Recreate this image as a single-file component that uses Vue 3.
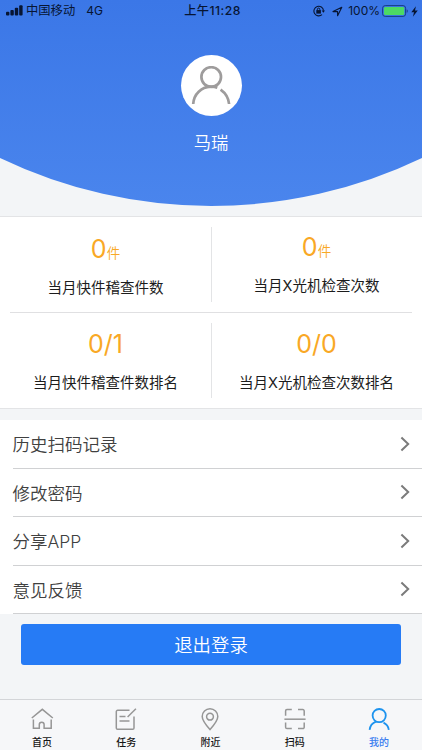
<template>
  <div class="page">
    <header class="hero">
      <svg class="hero-bg" width="422" height="207" viewBox="0 0 422 207">
        <defs>
          <linearGradient id="heroFill" x1="0" y1="0" x2="0" y2="1">
            <stop offset="0" stop-color="#3b77e7" />
            <stop offset="1" stop-color="#4a85ed" />
          </linearGradient>
        </defs>
        <path d="M0 0H422V158A488 488 0 0 1 0 158Z" fill="url(#heroFill)" />
      </svg>

      <div class="status">
        <div class="status-left">
          <svg class="signal" width="17" height="11" viewBox="0 0 17 11" fill="#071533">
            <rect x="0" y="6.8" width="3.4" height="3.7" rx="1" />
            <rect x="4.4" y="5" width="3.4" height="5.5" rx="1" />
            <rect x="8.8" y="2.8" width="3.4" height="7.7" rx="1" />
            <rect x="13.2" y="0.3" width="3.4" height="10.2" rx="1" />
          </svg>
          <span class="carrier">中国移动</span>
          <span class="network">4G</span>
        </div>
        <div class="status-time">上午11:28</div>
        <div class="status-right">
          <svg class="lock" width="12" height="12" viewBox="0 0 12 12" fill="none" stroke="#071533">
            <path d="M9 9.6A4.8 4.8 0 1 1 10.5 5.6" stroke-width="1.1" />
            <path d="M8.7 5.4h3.3L10.4 7.8z" fill="#071533" stroke="none" />
            <rect x="3.3" y="5.1" width="4.6" height="3.5" fill="#071533" stroke="none" />
            <path d="M4.4 5.5V4.3a1.2 1.2 0 0 1 2.4 0v1.2" stroke-width="1" />
          </svg>
          <svg class="arrow" width="11" height="11" viewBox="0 0 11 11" fill="none" stroke="#071533" stroke-width="1.1">
            <path d="M1 5.6L9.8 1.2L5.6 9.8V5.6z" stroke-linejoin="round" />
          </svg>
          <span class="percent">100%</span>
          <svg class="battery" width="27" height="12" viewBox="0 0 27 12">
            <rect x="0.6" y="0.6" width="23" height="10.8" rx="2.6" fill="none" stroke="#173c85" stroke-width="1" />
            <rect x="2" y="2" width="20.2" height="8" rx="1.2" fill="#4cd964" />
            <path d="M24.7 4.2c1.4.5 1.4 3.1 0 3.6z" fill="#173c85" />
          </svg>
          <svg class="bolt" width="7" height="11" viewBox="0 0 7 11">
            <path d="M4.9 0.3L0.3 6.2H3L1.9 10.7L6.8 4.5H4z" fill="#071533" />
          </svg>
        </div>
      </div>

      <div class="avatar">
        <svg width="40" height="40" viewBox="0 0 40 40" fill="none" stroke="#9e9c9c" stroke-width="2.7">
          <circle cx="20.2" cy="11" r="9.8" />
          <path d="M2.2 38C2.8 27.8 10.5 21.1 19.5 20.7c2.4-.1 4.5.2 6.8 1" />
          <path d="M29.6 23.6c4.8 3.4 8 8.5 8.5 14.4" />
        </svg>
      </div>
      <div class="name">马瑞</div>
    </header>

    <section class="stats">
      <div v-for="(stat, i) in stats" :key="stat.label" class="stat" :class="'stat-' + i">
        <div class="value">{{ stat.value }}<small v-if="stat.unit">{{ stat.unit }}</small></div>
        <div class="label">{{ stat.label }}</div>
      </div>
    </section>

    <ul class="menu">
      <li v-for="item in menu" :key="item">
        <span>{{ item }}</span>
        <svg width="10" height="16" viewBox="0 0 10 16" fill="none" stroke="#7b7b7b" stroke-width="2">
          <path d="M1.4 1.5L8.2 8L1.4 14.5" />
        </svg>
      </li>
    </ul>

    <button class="logout">退出登录</button>

    <nav class="tabs">
      <a v-for="tab in tabs" :key="tab.name" class="tab" :class="{ active: tab.name === current }">
        <svg width="24" height="24" viewBox="0 0 24 24">
          <path v-for="d in tab.paths" :key="d" :d="d" />
        </svg>
        <span>{{ tab.name }}</span>
      </a>
    </nav>
  </div>
</template>

<script setup>
import { ref } from "vue"

const current = ref("我的")

const stats = [
  { value: "0", unit: "件", label: "当月快件稽查件数" },
  { value: "0", unit: "件", label: "当月X光机检查次数" },
  { value: "0/1", label: "当月快件稽查件数排名" },
  { value: "0/0", label: "当月X光机检查次数排名" },
]

const menu = ["历史扫码记录", "修改密码", "分享APP", "意见反馈"]

const tabs = [
  {
    name: "首页",
    paths: [
      "M1.8 11L12.3 2.3L22.8 11",
      "M3.4 12.6V21.3H9.3V17.6A2.4 2.4 0 0 1 14.1 17.6V21.3H21.2V12.6",
    ],
  },
  {
    name: "任务",
    paths: [
      "M15.5 3.3H3.6A1.3 1.3 0 0 0 2.3 4.6V20.9A1.3 1.3 0 0 0 3.6 22.2H18.7A1.3 1.3 0 0 0 20 20.9V9.5",
      "M5.5 9.5H11.5",
      "M5.5 14H15.5",
      "M13.6 10L21.9 1.8",
    ],
  },
  {
    name: "附近",
    paths: [
      "M12 22.6C8.5 18.6 4.2 13.8 4.2 9.5A7.8 7.8 0 0 1 19.8 9.5C19.8 13.8 15.5 18.6 12 22.6Z",
      "M12 6.3A3.4 3.4 0 1 1 12 13.1A3.4 3.4 0 1 1 12 6.3",
    ],
  },
  {
    name: "扫码",
    paths: [
      "M2.6 8.8V4A1.4 1.4 0 0 1 4 2.6H8.8",
      "M15 2.6H19.8A1.4 1.4 0 0 1 21.2 4V8.8",
      "M2.6 15.5V20.2A1.4 1.4 0 0 0 4 21.6H8.8",
      "M15 21.6H19.8A1.4 1.4 0 0 0 21.2 20.2V15.5",
      "M1.4 12.2H22.6",
    ],
  },
  {
    name: "我的",
    paths: [
      "M12.2 2A6.6 6.6 0 1 1 12.2 15.2A6.6 6.6 0 1 1 12.2 2",
      "M2.6 22.8C3.1 18.8 5.2 16 9 14.6",
      "M16.5 15.6C19.5 17 21.4 19.5 21.8 22.8",
    ],
  },
]
</script>

<style>
body {
  background: #f3f5f7;
}
</style>

<style scoped>
.page {
  width: 422px;
  height: 750px;
  display: flex;
  flex-direction: column;
  overflow: hidden;
  background: #f3f5f7;
  font-family: Inter, "Noto Sans CJK SC", sans-serif;
}

/* ===== Header ===== */
.hero {
  position: relative;
  height: 216px;
  flex: none;
  display: flex;
  flex-direction: column;
  align-items: center;
}

.hero-bg {
  position: absolute;
  top: 0;
  left: 0;
}

.status {
  position: relative;
  width: 100%;
  height: 22px;
  box-sizing: border-box;
  padding: 0 4px 0 6px;
  display: grid;
  grid-template-columns: 1fr auto 1fr;
  align-items: center;
  color: #071533;
  font-size: 12px;
  line-height: 22px;
  white-space: nowrap;
}

.status-left,
.status-right {
  display: flex;
  align-items: center;
}

.status-right {
  justify-content: flex-end;
}

.signal {
  margin-bottom: 1px;
}

.carrier {
  margin-left: 3px;
  font-size: 12.3px;
}

.network {
  margin-left: 11px;
}

.status-time {
  padding-left: 1px;
  font-weight: 500;
  font-size: 12.2px;
  letter-spacing: 0.45px;
}

.arrow {
  margin-left: 7px;
}

.percent {
  margin-left: 5px;
}

.battery {
  margin-left: 2px;
}

.bolt {
  margin-left: 2px;
}

.avatar {
  position: relative;
  width: 61px;
  height: 61px;
  margin-top: 33px;
  border-radius: 50%;
  background: #fff;
  display: flex;
  align-items: center;
  justify-content: center;
}

.name {
  position: relative;
  margin-top: 14px;
  color: #fff;
  font-size: 17.3px;
  line-height: 26px;
  font-weight: 350;
}

/* ===== Stats ===== */
.stats {
  position: relative;
  flex: none;
  height: 193px;
  box-sizing: border-box;
  display: grid;
  grid-template-columns: 211px 211px;
  grid-template-rows: 96px 95px;
  border-top: 1px solid #e3e4e6;
  border-bottom: 1px solid #e3e4e6;
  background: #fff;
}

/* line between the two rows */
.stats::before {
  content: "";
  position: absolute;
  top: 95px;
  left: 10px;
  right: 10px;
  height: 1px;
  background: #e0e0e2;
}

.stat {
  position: relative;
  display: flex;
  flex-direction: column;
  align-items: center;
  padding-top: 16px;
}

.stat-1 {
  padding-top: 14px;
}

.stat-2,
.stat-3 {
  padding-top: 15px;
}

/* line between the two columns */
.stat-0::after,
.stat-2::after {
  content: "";
  position: absolute;
  top: 10px;
  right: -1px;
  width: 1px;
  height: 75px;
  background: #e3e4e6;
}

.value {
  color: #f9a825;
  font-size: 25px;
  line-height: 32px;
  height: 32px;
}

.value small {
  font-size: 13.5px;
  font-weight: 350;
}

.label {
  margin-top: 12px;
  color: #1c1c1c;
  font-size: 14.5px;
  line-height: 22px;
}

/* ===== Menu ===== */
.menu {
  flex: none;
  list-style: none;
  margin: 11px 0 0;
  padding: 0;
  background: linear-gradient(#fff, #fff) 0 0 / 100% 194px no-repeat;
}

.menu li {
  height: 48.5px;
  box-sizing: border-box;
  margin-left: 12.5px;
  padding-right: 12px;
  display: flex;
  align-items: center;
  justify-content: space-between;
  border-bottom: 1px solid #d0d1d3;
  color: #404040;
  font-size: 17.5px;
  font-weight: 350;
}

/* ===== Logout ===== */
.logout {
  flex: none;
  height: 41px;
  margin: 10px 21px 0;
  padding: 0 0 2px;
  border: none;
  border-radius: 3px;
  background: #267bf5;
  color: #fff;
  font-family: inherit;
  font-size: 18.4px;
  font-weight: 350;
}

/* ===== Tab bar ===== */
.tabs {
  height: 51px;
  box-sizing: border-box;
  margin-top: auto;
  padding-right: 1px;
  display: grid;
  grid-template-columns: repeat(5, 1fr);
  border-top: 1px solid #d3d5d8;
  background: #f6f7f9;
}

.tab {
  display: flex;
  flex-direction: column;
  align-items: center;
  padding-top: 7px;
  color: #151515;
  font-size: 10px;
  font-weight: 500;
  line-height: 14px;
}

.tab svg {
  fill: none;
  stroke: #969696;
  stroke-width: 1.5;
}

.tab span {
  margin-top: 4px;
}

.tab.active {
  color: #3a7df0;
}

.tab.active svg {
  stroke: #1d93ee;
  stroke-width: 1.8;
}
</style>
